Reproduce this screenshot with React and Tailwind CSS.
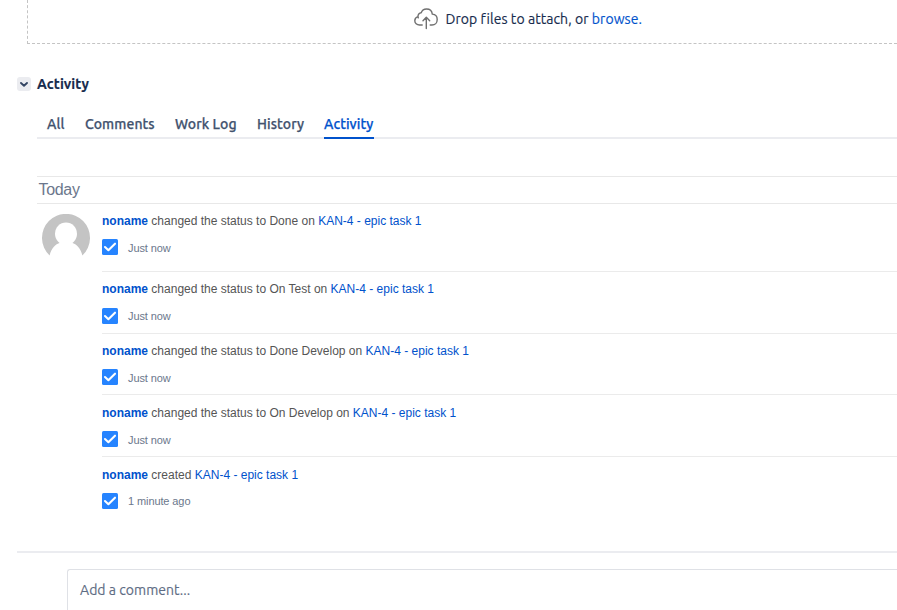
import React from "react";

const UI = "font-['Ubuntu','Noto_Sans',sans-serif]";

const tabs = [
  { label: "All", box: "w-[18px]" },
  { label: "Comments", box: "w-[70px]" },
  { label: "Work Log", box: "w-[62px]" },
  { label: "History", box: "w-[47px]" },
  { label: "Activity", box: "w-[50px]", active: true },
];

const entries = [
  { action: "changed the status to Done on", time: "Just now", row: "h-[68px] pt-[9px]", gap: "mt-[10px]", label: "mt-px" },
  { action: "changed the status to On Test on", time: "Just now", row: "h-[62px] pt-[9px]", gap: "mt-[11px]", label: "" },
  { action: "changed the status to Done Develop on", time: "Just now", row: "h-[61px] pt-[9px]", gap: "mt-[10px]", label: "mt-px" },
  { action: "changed the status to On Develop on", time: "Just now", row: "h-[62px] pt-[10px]", gap: "mt-[10px]", label: "mt-px" },
  { action: "created", time: "1 minute ago", row: "h-[62px] pt-[10px]", gap: "mt-[10px]", label: "" },
];

function CloudUpload() {
  return (
    <svg className="h-[22px] w-6 shrink-0" viewBox="0 0 24 22" fill="none" stroke="#707070" strokeWidth="1.4" strokeLinecap="round" strokeLinejoin="round">
      <path d="M8.2 17H5.5C2.8 17 .8 15.2.8 12.7c0-2 1.3-3.6 3.2-4.1-.2-2 1.2-3.7 3.2-3.8C8 2.5 9.9 1 12.5 1c3.1 0 5.5 2.1 5.8 5.1 2.9.2 4.9 2.4 4.9 5.3 0 3.2-2.2 5.6-5.2 5.6h-1.8M4 8.6l.3 1.2" />
      <path d="M12.3 20.5V9.5M9 12.7l3.3-3.4 3.4 3.4" />
    </svg>
  );
}

function TaskIcon() {
  return (
    <svg className="size-4 shrink-0" viewBox="0 0 16 16">
      <rect width="16" height="16" rx="1.5" fill="#2684ff" />
      <path d="M3 8 6.400 11.200 13 4.700" fill="none" stroke="#fff" strokeWidth="2.100" strokeLinecap="round" strokeLinejoin="round" />
    </svg>
  );
}

function Avatar() {
  return (
    <svg className="ml-[5px] mt-[10px] h-12 w-12 shrink-0" viewBox="0 0 48 48">
      <path d="M7.6 41.4A24 24 0 1 1 40.4 41.4C38.8 34.5 34.5 30.2 30 28.8H18C13.5 30.2 9.2 34.5 7.6 41.4Z" fill="#c4c4c4" />
      <ellipse cx="24" cy="19.8" rx="11" ry="11.3" fill="#fff" />
    </svg>
  );
}

export default function App() {
  return (
    <div className="flex h-[610px] w-full flex-col overflow-hidden bg-white font-['Liberation_Sans',Arial,sans-serif]">
      <div className={`ml-[27px] flex h-11 shrink-0 items-start border-b border-l border-dashed border-[#c4c4c4] pl-[386px] ${UI}`}>
        <div className="flex pt-2">
          <CloudUpload />
          <p className="ml-[7.5px] whitespace-nowrap text-[14px] leading-[22px] tracking-[0.06px] text-[#172b4d] [-webkit-text-stroke:0.15px]">
            Drop files to attach, or <span className="text-[#0052cc]">browse.</span>
          </p>
        </div>
      </div>

      <div className={`ml-[17px] mt-[30px] flex h-5 shrink-0 items-center ${UI}`}>
        <span className="flex size-[14px] items-center justify-center rounded-[3px] bg-[#ebecf0]">
          <svg className="size-[14px]" viewBox="0 0 14 14" fill="none" stroke="#344563" strokeWidth="1.9" strokeLinecap="round" strokeLinejoin="round">
            <path d="m4 6 3 2.7L10 6" />
          </svg>
        </span>
        <h2 className="ml-[6px] text-[14px] font-bold leading-5 tracking-[0.1px] text-[#172b4d] [-webkit-text-stroke:0.15px]">Activity</h2>
      </div>

      <nav className={`ml-[37px] mt-[18px] flex h-[27px] shrink-0 gap-5 pl-[10px] shadow-[inset_0_-2px_0_#ebecf0] ${UI}`}>
        {tabs.map((t) => (
          <span
            key={t.label}
            className={`whitespace-nowrap text-[14px] font-medium leading-6 tracking-[0.08px] [-webkit-text-stroke:0.25px] ${t.box} ${
              t.active ? "border-b-2 border-[#0052cc] text-[#0052cc]" : "text-[#42526e]"
            }`}
          >
            {t.label}
          </span>
        ))}
      </nav>

      <section className="ml-[37px] mt-[37px] shrink-0">
        <h3 className="h-7 border-y border-[#e8e8e8] pl-[1.5px] text-[16px] leading-[25px] tracking-[-0.32px] text-[#6b778c]">Today</h3>
        <div className="flex">
          <Avatar />
          <ul className="ml-3 min-w-0 flex-1">
            {entries.map((e) => (
              <li key={e.action} className={`border-b border-[#ebebeb] last:border-b-0 ${e.row}`}>
                <p className="whitespace-nowrap text-[12px] leading-4 text-[#555555]">
                  <b className="text-[#0052cc]">noname</b> {e.action} <span className="text-[#0052cc]">KAN-4 - epic task 1</span>
                </p>
                <div className={`flex h-4 ${e.gap}`}>
                  <TaskIcon />
                  <span className={`ml-[10px] text-[11px] leading-4 tracking-[-0.1px] text-[#6b778c] ${e.label}`}>{e.time}</span>
                </div>
              </li>
            ))}
          </ul>
        </div>
      </section>

      <div className="ml-[17px] mt-8 h-[2px] shrink-0 bg-[#ebecf0]" />
      <div className={`ml-[67px] mt-4 h-[60px] shrink-0 rounded-tl-[3px] border-l border-t border-[#dfe1e6] pl-3 pt-[9px] text-[14px] leading-[22px] tracking-[0.04px] text-[#5e6c84] [-webkit-text-stroke:0.15px] ${UI}`}>
        Add a comment...
      </div>
    </div>
  );
}
